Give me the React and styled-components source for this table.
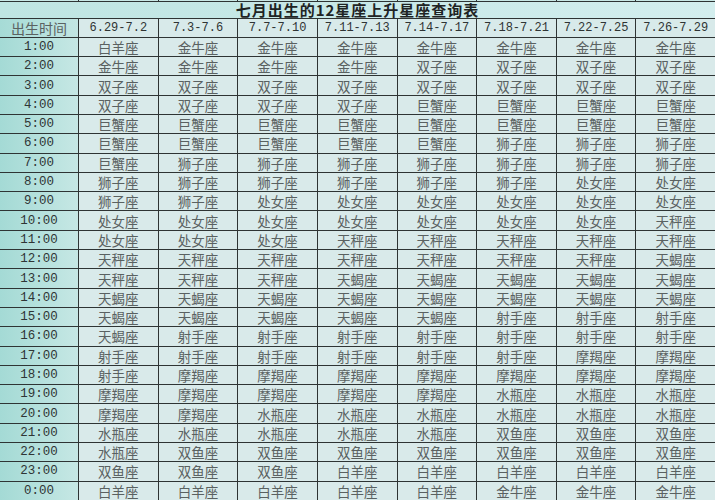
import React from 'react';
import styled, { createGlobalStyle } from 'styled-components';

const GlobalStyle = createGlobalStyle`
  html, body {
    margin: 0;
    padding: 0;
    width: 715px;
    height: 500px;
    overflow: hidden;
    background: #d9eaea;
  }
`;

const dates = ['6.29-7.2', '7.3-7.6', '7.7-7.10', '7.11-7.13', '7.14-7.17', '7.18-7.21', '7.22-7.25', '7.26-7.29'];

const rows = [
  ['1:00', '白羊座', '金牛座', '金牛座', '金牛座', '金牛座', '金牛座', '金牛座', '金牛座'],
  ['2:00', '金牛座', '金牛座', '金牛座', '金牛座', '双子座', '双子座', '双子座', '双子座'],
  ['3:00', '双子座', '双子座', '双子座', '双子座', '双子座', '双子座', '双子座', '双子座'],
  ['4:00', '双子座', '双子座', '双子座', '双子座', '巨蟹座', '巨蟹座', '巨蟹座', '巨蟹座'],
  ['5:00', '巨蟹座', '巨蟹座', '巨蟹座', '巨蟹座', '巨蟹座', '巨蟹座', '巨蟹座', '巨蟹座'],
  ['6:00', '巨蟹座', '巨蟹座', '巨蟹座', '巨蟹座', '巨蟹座', '狮子座', '狮子座', '狮子座'],
  ['7:00', '巨蟹座', '狮子座', '狮子座', '狮子座', '狮子座', '狮子座', '狮子座', '狮子座'],
  ['8:00', '狮子座', '狮子座', '狮子座', '狮子座', '狮子座', '狮子座', '处女座', '处女座'],
  ['9:00', '狮子座', '狮子座', '处女座', '处女座', '处女座', '处女座', '处女座', '处女座'],
  ['10:00', '处女座', '处女座', '处女座', '处女座', '处女座', '处女座', '处女座', '天秤座'],
  ['11:00', '处女座', '处女座', '处女座', '天秤座', '天秤座', '天秤座', '天秤座', '天秤座'],
  ['12:00', '天秤座', '天秤座', '天秤座', '天秤座', '天秤座', '天秤座', '天秤座', '天蝎座'],
  ['13:00', '天秤座', '天秤座', '天秤座', '天蝎座', '天蝎座', '天蝎座', '天蝎座', '天蝎座'],
  ['14:00', '天蝎座', '天蝎座', '天蝎座', '天蝎座', '天蝎座', '天蝎座', '天蝎座', '天蝎座'],
  ['15:00', '天蝎座', '天蝎座', '天蝎座', '天蝎座', '天蝎座', '射手座', '射手座', '射手座'],
  ['16:00', '天蝎座', '射手座', '射手座', '射手座', '射手座', '射手座', '射手座', '射手座'],
  ['17:00', '射手座', '射手座', '射手座', '射手座', '射手座', '射手座', '摩羯座', '摩羯座'],
  ['18:00', '射手座', '摩羯座', '摩羯座', '摩羯座', '摩羯座', '摩羯座', '摩羯座', '摩羯座'],
  ['19:00', '摩羯座', '摩羯座', '摩羯座', '摩羯座', '摩羯座', '水瓶座', '水瓶座', '水瓶座'],
  ['20:00', '摩羯座', '摩羯座', '水瓶座', '水瓶座', '水瓶座', '水瓶座', '水瓶座', '水瓶座'],
  ['21:00', '水瓶座', '水瓶座', '水瓶座', '水瓶座', '水瓶座', '双鱼座', '双鱼座', '双鱼座'],
  ['22:00', '水瓶座', '双鱼座', '双鱼座', '双鱼座', '双鱼座', '双鱼座', '双鱼座', '双鱼座'],
  ['23:00', '双鱼座', '双鱼座', '双鱼座', '白羊座', '白羊座', '白羊座', '白羊座', '白羊座'],
  ['0:00', '白羊座', '白羊座', '白羊座', '白羊座', '白羊座', '金牛座', '金牛座', '金牛座'],
];

const App = () => {
  return (
    <>
      <GlobalStyle />
      <Sheet>
        {Array.from({ length: 9 }).map((_, i) => (
          <EdgeCell key={'e' + i} />
        ))}
        <TitleCell>七月出生的12星座上升星座查询表</TitleCell>
        <HeadCell $label>出生时间</HeadCell>
        {dates.map((d) => (
          <HeadCell key={d}>{d}</HeadCell>
        ))}
        {rows.map((r) => (
          <React.Fragment key={r[0]}>
            <TimeCell>{r[0]}</TimeCell>
            {r.slice(1).map((s, i) => (
              <SignCell key={i}>{s}</SignCell>
            ))}
          </React.Fragment>
        ))}
      </Sheet>
    </>
  );
};

export default App;

const Sheet = styled.div`
  display: grid;
  grid-template-columns: 78px repeat(8, 1fr);
  grid-template-rows: 1px 15.5px repeat(25, 18.3px);
  gap: 1px;
  width: 715px;
  height: 500px;
  background: #2e3434;
  overflow: hidden;
`;

const Cell = styled.div`
  display: flex;
  align-items: center;
  justify-content: center;
  white-space: nowrap;
  line-height: 18px;
  min-width: 0;
`;

const EdgeCell = styled(Cell)`
  background: #c9e8e6;
`;

const TitleCell = styled(Cell)`
  grid-column: 1 / -1;
  background: linear-gradient(90deg, #bfe5e2 0%, #c8e9e8 50%, #d3eeee 100%);
  font-family: "Noto Sans CJK SC", sans-serif;
  font-weight: 700;
  font-size: 15px;
  line-height: 15px;
  letter-spacing: 1px;
  color: #1f2424;
`;

const HeadCell = styled(Cell)`
  background: ${(p) => (p.$label ? 'linear-gradient(90deg, #a6dbd6, #c3e6e3)' : '#d8eaea')};
  font-family: ${(p) => (p.$label ? '"Noto Sans CJK SC", sans-serif' : '"Liberation Mono", "DejaVu Sans Mono", monospace')};
  font-size: ${(p) => (p.$label ? '14px' : '12px')};
  color: ${(p) => (p.$label ? '#5b6262' : '#2f3434')};
`;

const TimeCell = styled(Cell)`
  background: linear-gradient(90deg, #a4dad5 0%, #b8e2de 60%, #c6e7e4 100%);
  font-family: "Liberation Mono", "DejaVu Sans Mono", monospace;
  font-size: 12.5px;
  color: #2f3535;
`;

const SignCell = styled(Cell)`
  background: #d9eaea;
  font-family: "Noto Sans CJK SC", sans-serif;
  font-weight: 400;
  font-size: 13.5px;
  color: #5a6161;
`;
